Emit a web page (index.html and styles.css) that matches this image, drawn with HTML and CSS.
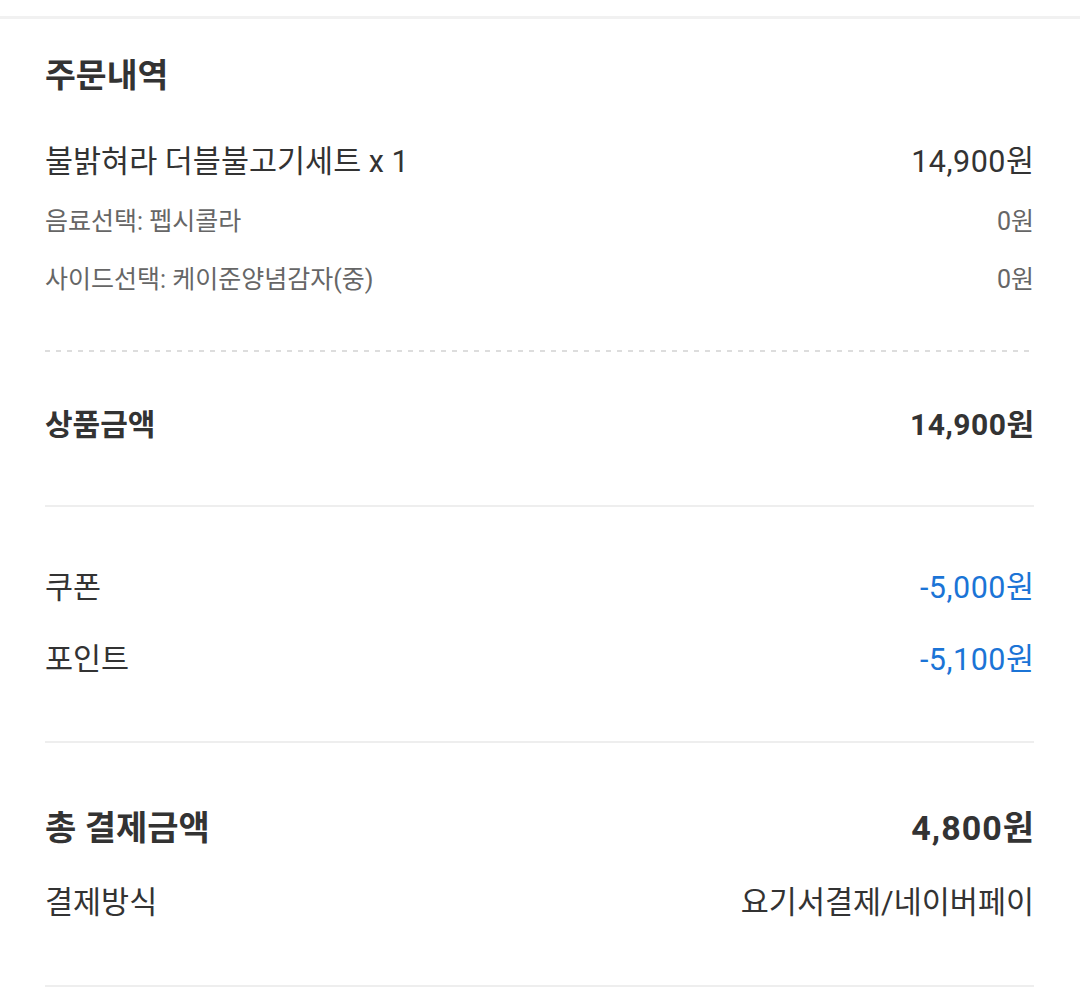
FILE: index.html
```html
<!DOCTYPE html>
<html lang="ko">
<head>
<meta charset="utf-8">
<title>주문내역</title>
<link rel="stylesheet" href="styles.css">
</head>
<body>
<div class="topline"></div>
<main class="order">
  <h2 class="title">주문내역</h2>

  <div class="row item">
    <span>불밝혀라 더블불고기세트 x 1</span>
    <span class="amount">14,900원</span>
  </div>
  <div class="row option first">
    <span>음료선택: 펩시콜라</span>
    <span>0원</span>
  </div>
  <div class="row option">
    <span>사이드선택: 케이준양념감자(중)</span>
    <span>0원</span>
  </div>

  <div class="dotted"></div>

  <div class="row subtotal">
    <span>상품금액</span>
    <span class="amount">14,900원</span>
  </div>

  <div class="rule rule-1"></div>

  <div class="row discount coupon">
    <span>쿠폰</span>
    <span class="amount minus">-5,000원</span>
  </div>
  <div class="row discount point">
    <span>포인트</span>
    <span class="amount minus">-5,100원</span>
  </div>

  <div class="rule rule-2"></div>

  <div class="row total">
    <span>총 결제금액</span>
    <span class="amount wide">4,800원</span>
  </div>
  <div class="row method">
    <span>결제방식</span>
    <span>요기서결제/네이버페이</span>
  </div>

  <div class="rule rule-3"></div>
</main>
</body>
</html>
```

FILE: styles.css
```css
html, body {
  margin: 0;
  padding: 0;
  background: #ffffff;
}

body {
  font-family: Roboto, "Noto Sans CJK KR", sans-serif;
  color: #333333;
  width: 1080px;
  height: 991px;
  overflow: hidden;
}

.topline {
  margin-top: 16px;
  height: 3px;
  background: #f1f1f1;
}

.order {
  padding: 0 46px 0 45px;
}

.title {
  margin: 37px 0 0;
  font-size: 33.5px;
  line-height: 40px;
  font-weight: 700;
  color: #333333;
}

.row {
  display: flex;
  justify-content: space-between;
  align-items: center;
  height: 40px;
  line-height: 40px;
  white-space: nowrap;
}

.amount {
  letter-spacing: 0.5px;
  margin-right: -0.5px;
}

.amount.wide {
  letter-spacing: 1px;
  margin-right: -1px;
}

.item {
  margin-top: 46px;
  font-size: 30.5px;
  color: #333333;
}

.option {
  height: 36px;
  line-height: 36px;
  margin-top: 22px;
  font-size: 25px;
  color: #666666;
}

.dotted {
  margin-top: 52px;
  height: 2px;
  background: repeating-linear-gradient(to right, #dddddd 0 5px, transparent 5px 11px);
}

.subtotal {
  margin-top: 53px;
  font-size: 30px;
  font-weight: 700;
}

.rule {
  height: 2px;
  background: #eeeeee;
}

.rule-1 { margin-top: 60px; }

.discount {
  font-size: 30.5px;
}

.coupon { margin-top: 61px; }
.point { margin-top: 32px; }

.minus {
  color: #1b74d6;
}

.rule-2 { margin-top: 61px; }

.total {
  margin-top: 65px;
  font-size: 34px;
  font-weight: 700;
}

.method {
  margin-top: 35px;
  font-size: 30.5px;
}

.rule-3 { margin-top: 62px; }
```
